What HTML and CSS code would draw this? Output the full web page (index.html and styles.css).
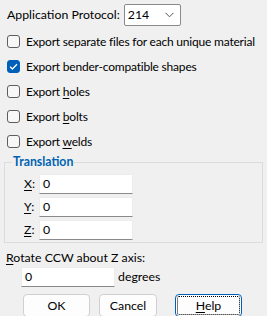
FILE: index.html
```html
<!DOCTYPE html>
<html lang="en">
<head>
  <meta charset="UTF-8" />
  <title>Export Options</title>
  <link rel="stylesheet" href="styles.css">
</head>
<body>
  <div class="dialog">
    <div class="protocol">
      <span>Application Protocol:</span>
      <div class="select">
        <span>214</span>
        <svg class="chev" width="9" height="6" viewBox="0 0 9 6"><path d="M0.5 0.8 L4.5 4.8 L8.5 0.8" fill="none" stroke="#555" stroke-width="1"/></svg>
      </div>
    </div>

    <div class="checks">
      <label class="check"><span class="box"></span><span>Export separate files for each unique material</span></label>
      <label class="check"><span class="box on"><svg width="9" height="7" viewBox="0 0 9 7"><path d="M1 3.6 L3.4 6 L8 1.2" fill="none" stroke="#fff" stroke-width="1.3"/></svg></span><span>Export bender-compatible shapes</span></label>
      <label class="check"><span class="box"></span><span>Export <u>h</u>oles</span></label>
      <label class="check"><span class="box"></span><span>Export <u>b</u>olts</span></label>
      <label class="check"><span class="box"></span><span>Export <u>w</u>elds</span></label>
    </div>

    <fieldset class="group">
      <legend>Translation</legend>
      <div class="field"><span class="axis"><u>X</u>:</span><div class="input">0</div></div>
      <div class="field"><span class="axis"><u>Y</u>:</span><div class="input">0</div></div>
      <div class="field"><span class="axis"><u>Z</u>:</span><div class="input">0</div></div>
    </fieldset>

    <div class="rotate-label"><u>R</u>otate CCW about Z axis:</div>
    <div class="rotate">
      <div class="input">0</div>
      <span>degrees</span>
    </div>

    <div class="buttons">
      <button class="btn ok">OK</button>
      <button class="btn cancel">Cancel</button>
      <button class="btn help"><u>H</u>elp</button>
    </div>
  </div>
</body>
</html>
```

FILE: styles.css
```css
body {
  margin: 0;
  background-color: #f0f0f0;
  color: #000;
  font-family: Lato, 'Noto Sans', sans-serif;
  font-size: 12.3px;
  line-height: 16px;
}
u {
  text-decoration-thickness: 1px;
  text-underline-offset: 2px;
}
.dialog {
  width: 267px;
  height: 316px;
  overflow: hidden;
}
.protocol {
  display: flex;
  align-items: center;
  gap: 3px;
  margin-top: 4px;
  padding-left: 7px;
  height: 22px;
  white-space: nowrap;
}
.select {
  width: 46px;
  height: 20px;
  background: #fff;
  border: 1px solid #8a8a8a;
  border-radius: 2px;
  display: flex;
  align-items: center;
  justify-content: space-between;
  padding: 0 6px 0 3px;
  box-sizing: content-box;
  margin-left: 1px;
}
.checks {
  margin-top: 3px;
}
.check {
  display: flex;
  align-items: center;
  height: 25px;
  padding-left: 7px;
  white-space: nowrap;
  font-size: 12px;
  letter-spacing: -0.2px;
}
.box {
  width: 11px;
  height: 11px;
  border: 1px solid #5d5d5d;
  border-radius: 3px;
  background: #f7f7f7;
  margin-right: 6px;
  display: flex;
  align-items: center;
  justify-content: center;
  flex: none;
}
.box.on {
  background: #005fb8;
  border-color: #005fb8;
}
.group {
  margin: 0 4px 0 4px;
  padding: 2px 0 1px 0;
  border: 1px solid #dcdcdc;
  width: 257px;
  box-sizing: content-box;
  min-width: 0;
}
.group legend {
  margin-left: 7px;
  padding: 0 1px;
  color: #0063b1;
  font-weight: 700;
  line-height: 16px;
}
.field {
  display: flex;
  align-items: center;
  height: 23px;
  padding-left: 19px;
}
.axis {
  width: 15px;
}
.input {
  background: #fff;
  border: 1px solid #ececec;
  border-bottom-color: #8a8a8a;
  padding: 0 0 0 3px;
  display: flex;
  align-items: center;
  box-sizing: border-box;
  width: 94px;
  height: 20px;
}
.rotate-label {
  margin-top: 7px;
  padding-left: 6px;
}
.rotate {
  display: flex;
  align-items: center;
  gap: 3px;
  margin-top: 1px;
  padding-left: 21px;
  height: 20px;
}
.buttons {
  display: flex;
  margin-top: 7px;
  padding-left: 23px;
}
.btn {
  height: 23px;
  font-family: inherit;
  font-size: 12.3px;
  background: #fdfdfd;
  border: 1px solid #d0d0d0;
  border-radius: 4px;
  padding: 0;
  color: #000;
}
.ok {
  width: 67px;
}
.cancel {
  width: 58px;
  margin-left: 9px;
}
.help {
  width: 67px;
  margin-left: 18px;
  border-color: #005fb8;
  outline: 1px dotted #000;
  outline-offset: -3px;
}
```
